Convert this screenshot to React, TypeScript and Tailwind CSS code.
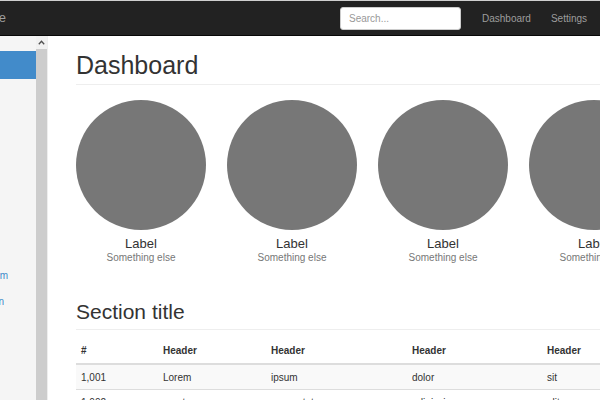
import React from "react";

const circles = [0, 1, 2, 3];

export default function App() {
  return (
    <div className="w-[600px] h-[400px] overflow-hidden bg-white text-[#333] font-['Liberation_Sans',Arial,sans-serif] flex flex-col">
      {/* navbar */}
      <div className="h-[36px] shrink-0 bg-[#222] border-t border-t-[#cfcfcf] border-b border-b-[#080808] flex items-center">
        <div className="w-[340px] shrink-0 flex">
          <div className="w-[6px] overflow-hidden flex justify-end whitespace-nowrap text-[13px] leading-[16px] text-[#9d9d9d]">
            Project name
          </div>
        </div>
        <div className="w-[121px] h-[23px] shrink-0 bg-white rounded-[3px] border border-[#ccc] flex items-center pl-[8px] text-[10px] text-[#999]">
          Search...
        </div>
        <div className="ml-[21px] text-[10px] text-[#9d9d9d] whitespace-nowrap">Dashboard</div>
        <div className="ml-[20px] text-[10px] text-[#9d9d9d] whitespace-nowrap">Settings</div>
        <div className="ml-[21px] text-[10px] text-[#9d9d9d] whitespace-nowrap">Profile</div>
      </div>

      <div className="flex flex-1 min-h-0">
        {/* sidebar */}
        <div className="w-[48px] shrink-0 flex border-r border-[#eee]">
          <div className="w-[36px] bg-[#f5f5f5] text-[10px] text-[#428bca] pt-[15px]">
            <div className="h-[28px] bg-[#428bca]" />
            <div className="h-[183px]" />
            <div className="h-[26px] flex items-center">
              <div className="w-[8px] overflow-hidden flex justify-end whitespace-nowrap">Another nav item</div>
            </div>
            <div className="h-[26px] flex items-center">
              <div className="w-[4px] overflow-hidden flex justify-end whitespace-nowrap">More navigation</div>
            </div>
          </div>
          <div className="w-[11px] flex flex-col">
            <div className="h-[13px] bg-[#f1f1f1] flex items-center justify-center">
              <svg width="7" height="5" viewBox="0 0 7 5">
                <path d="M0.8 4.2 L3.5 1.3 L6.2 4.2" fill="none" stroke="#505050" strokeWidth="1.3" />
              </svg>
            </div>
            <div className="flex-1 bg-[#cdcdcd]" />
          </div>
        </div>

        {/* main */}
        <div className="flex-1 min-w-0 pl-[28px] pt-[15px]">
          <div className="w-[640px]">
            <div className="text-[25px] leading-[28px] pb-[5px] border-b border-[#eee] text-[#333]">Dashboard</div>
            <div className="flex gap-[21px] mt-[15px]">
              {circles.map((i) => (
                <div key={i} className="w-[130px] shrink-0 flex flex-col items-center">
                  <div className="w-[130px] h-[130px] rounded-full bg-[#777]" />
                  <div className="mt-[6px] text-[13px] leading-[15px] text-[#333]">Label</div>
                  <div className="mt-[1px] text-[10px] leading-[12px] text-[#777]">Something else</div>
                </div>
              ))}
            </div>
            <div className="mt-[36px] text-[21px] leading-[24px] pb-[5px] border-b border-[#eee] text-[#333]">
              Section title
            </div>
            <div className="mt-[7px] text-[10px] text-[#333]">
              <div className="grid grid-cols-[82px_108px_141px_135px_1fr] h-[28px] border-b-2 border-[#ddd] font-bold items-center">
                <div className="pl-[5px]">#</div>
                <div className="pl-[5px]">Header</div>
                <div className="pl-[5px]">Header</div>
                <div className="pl-[5px]">Header</div>
                <div className="pl-[5px]">Header</div>
              </div>
              <div className="grid grid-cols-[82px_108px_141px_135px_1fr] h-[24px] bg-[#f9f9f9] items-center">
                <div className="pl-[5px]">1,001</div>
                <div className="pl-[5px]">Lorem</div>
                <div className="pl-[5px]">ipsum</div>
                <div className="pl-[5px]">dolor</div>
                <div className="pl-[5px]">sit</div>
              </div>
              <div className="grid grid-cols-[82px_108px_141px_135px_1fr] h-[25px] border-t border-[#ddd] items-center">
                <div className="pl-[5px]">1,002</div>
                <div className="pl-[5px]">amet</div>
                <div className="pl-[5px]">consectetur</div>
                <div className="pl-[5px]">adipiscing</div>
                <div className="pl-[5px]">elit</div>
              </div>
            </div>
          </div>
        </div>
      </div>
    </div>
  );
}
